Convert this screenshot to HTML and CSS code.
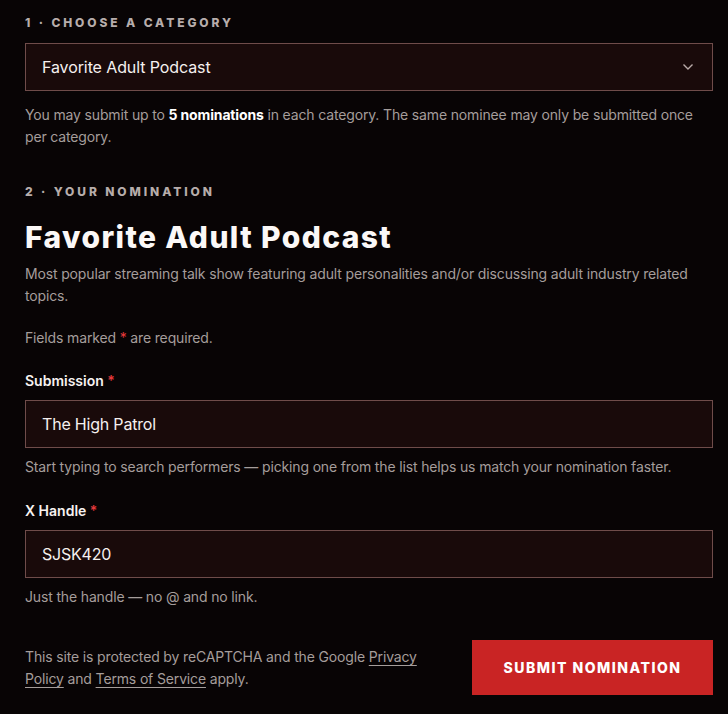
FILE: index.html
```html
<!DOCTYPE html>
<html lang="en">
<head>
<meta charset="utf-8">
<title>Nomination</title>
<link rel="stylesheet" href="styles.css">
</head>
<body>
<main class="form">
  <section class="step">
    <h3 class="step-label">1 · Choose a category</h3>
    <div class="select">
      <span class="select-value">Favorite Adult Podcast</span>
      <svg class="chevron" width="12" height="8" viewBox="0 0 12 8"><path d="M1.5 1.5 L6 6 L10.5 1.5" fill="none" stroke="#b9aaa8" stroke-width="1.4"/></svg>
    </div>
    <p class="help">You may submit up to <strong>5 nominations</strong> in each category. The same nominee may only be submitted once per category.</p>
  </section>

  <section class="step step-two">
    <h3 class="step-label">2 · Your nomination</h3>
    <h1 class="title">Favorite Adult Podcast</h1>
    <p class="help desc">Most popular streaming talk show featuring adult personalities and/or discussing adult industry related topics.</p>
    <p class="help req">Fields marked <span class="star">*</span> are required.</p>

    <div class="field">
      <label class="label">Submission <span class="star">*</span></label>
      <div class="input">The High Patrol</div>
      <p class="help">Start typing to search performers — picking one from the list helps us match your nomination faster.</p>
    </div>

    <div class="field">
      <label class="label">X Handle <span class="star">*</span></label>
      <div class="input">SJSK420</div>
      <p class="help">Just the handle — no @ and no link.</p>
    </div>

    <div class="footer">
      <p class="help legal">This site is protected by reCAPTCHA and the Google <a href="#">Privacy Policy</a> and <a href="#">Terms of Service</a> apply.</p>
      <button class="submit">Submit nomination</button>
    </div>
  </section>
</main>
</body>
</html>
```

FILE: styles.css
```css
* { box-sizing: border-box; }
html, body { margin: 0; background: #080405; }
body {
  font-family: Inter, "Noto Sans", sans-serif;
  color: #f3eeee;
  padding: 0 15px 0 25px;
}
.step-label {
  margin: 0;
  font-family: Inter, sans-serif;
  font-weight: 800;
  font-size: 12px;
  letter-spacing: 2.9px;
  text-transform: uppercase;
  color: #b7adab;
  line-height: 14px;
}
.step { padding-top: 16px; }
.step-two { padding-top: 37px; }
.select {
  margin-top: 13px;
  height: 48px;
  border: 1px solid #6f4c4a;
  background: #190a0a;
  display: flex;
  align-items: center;
  justify-content: space-between;
  padding: 0 18px 0 16px;
}
.select-value { font-size: 16px; color: #f5f0ef; letter-spacing: -0.1px; }
.chevron { display: block; }
.help {
  margin: 0;
  font-size: 14px;
  line-height: 22px;
  letter-spacing: -0.15px;
  color: #a59d9b;
}
.help strong { color: #fff; font-weight: 700; }
.step > .help { margin-top: 13px; }
.title {
  margin: 21px 0 0;
  font-family: Inter, sans-serif;
  font-weight: 800;
  font-size: 30px;
  letter-spacing: 1.4px;
  line-height: 34px;
  color: #fbf8f7;
}
.step > .help.desc { margin-top: 9px; }
.step > .help.req { margin-top: 20px; }
.star { color: #e5393b; }
.field { margin-top: 23px; }
.field + .field { margin-top: 24px; }
.label {
  display: block;
  font-size: 14px;
  font-weight: 600;
  line-height: 18px;
  color: #f7f2f1;
}
.input {
  margin-top: 10px;
  height: 48px;
  border: 1px solid #6f4c4a;
  background: #190a0a;
  display: flex;
  align-items: center;
  padding: 0 16px;
  font-size: 16px;
  letter-spacing: -0.2px;
  color: #f5f0ef;
}
.field .help { margin-top: 8px; }
.footer {
  margin-top: 32px;
  display: flex;
  align-items: center;
  justify-content: space-between;
  gap: 40px;
}
.legal { max-width: 420px; }
.legal a { color: #a59d9b; text-decoration: underline; text-underline-offset: 3px; text-decoration-thickness: 1px; }
.submit {
  flex: none;
  width: 241px;
  height: 55px;
  border: none;
  background: #c92424;
  color: #fff;
  font-family: Inter, sans-serif;
  font-weight: 800;
  font-size: 14px;
  letter-spacing: 1.5px;
  text-transform: uppercase;
}
```
